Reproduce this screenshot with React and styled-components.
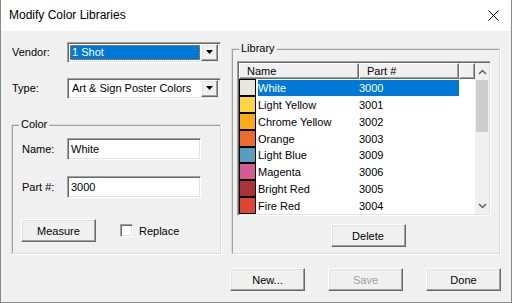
import React from 'react';
import styled, { createGlobalStyle, css } from 'styled-components';

const Global = createGlobalStyle`
  html, body { margin: 0; padding: 0; background: #ffffff; }
  * { box-sizing: border-box; }
`;

const raised = css`
  border: 1px solid;
  border-color: #ffffff #696969 #696969 #ffffff;
  box-shadow: inset -1px -1px 0 #a0a0a0, inset 1px 1px 0 #e3e3e3;
`;

const sunken = css`
  border: 1px solid;
  border-color: #a0a0a0 #ffffff #ffffff #a0a0a0;
  box-shadow: inset 1px 1px 0 #696969, inset -1px -1px 0 #e3e3e3;
`;

const Window = styled.div`
  width: 512px;
  height: 303px;
  border: 1px solid #8a8a8a;
  border-top: none;
  background: #f0f0f0;
  font-family: "Liberation Sans", Arial, sans-serif;
  font-size: 11px;
  color: #000;
  display: flex;
  flex-direction: column;
`;

const TitleBar = styled.div`
  height: 31px;
  background: #ffffff;
  display: flex;
  align-items: center;
  justify-content: space-between;
  padding: 0 12px 1px 8px;
  font-size: 12px;
  flex-shrink: 0;
`;

const Body = styled.div`
  display: grid;
  grid-template-columns: 210px 269px;
  column-gap: 10px;
  padding: 11px 0 0 10px;
`;

const Left = styled.div`
  display: flex;
  flex-direction: column;
`;

const Row = styled.div`
  display: flex;
  align-items: center;
  height: 20px;
  margin-top: ${p => p.$top || 0}px;
`;

const Label = styled.span`
  width: ${p => p.$w || 56}px;
  padding-left: ${p => p.$pad || 1}px;
`;

const Combo = styled.div`
  ${sunken};
  width: 154px;
  height: 21px;
  background: #fff;
  display: flex;
  align-items: center;
  padding: 2px;
`;

const ComboText = styled.div`
  flex: 1;
  height: 100%;
  display: flex;
  align-items: center;
  padding-left: 2px;
  ${p => p.$selected && css`
    background: #0078d7;
    color: #fff;
    outline: 1px dotted #e08020;
    outline-offset: -1px;
  `}
`;

const ComboButton = styled.div`
  ${raised};
  width: 17px;
  height: 17px;
  background: #f0f0f0;
  display: flex;
  align-items: center;
  justify-content: center;
  margin-left: 1px;
`;

const Group = styled.div`
  position: relative;
  border: 1px solid #dcdcdc;
  box-shadow: inset 1px 1px 0 #a0a0a0, 1px 1px 0 #ffffff;
  margin-top: ${p => p.$top || 0}px;
  width: ${p => p.$w}px;
  height: ${p => p.$h}px;
  padding: ${p => p.$pad};
`;

const Legend = styled.span`
  position: absolute;
  top: -7px;
  left: 7px;
  padding: 0 2px;
  background: #f0f0f0;
  line-height: 13px;
`;

const TextBox = styled.div`
  ${sunken};
  width: 134px;
  height: 22px;
  background: #fff;
  padding: 3px 3px;
  line-height: 14px;
`;

const Button = styled.div`
  ${raised};
  width: ${p => p.$w || 75}px;
  height: 23px;
  background: #f0f0f0;
  display: flex;
  align-items: center;
  justify-content: center;
  color: ${p => (p.$disabled ? '#a0a0a0' : '#000')};
`;

const CheckRow = styled.div`
  display: flex;
  align-items: center;
  margin-left: 24px;
  gap: 6px;
`;

const CheckBox = styled.div`
  ${sunken};
  width: 13px;
  height: 13px;
  background: #fff;
`;

const ListBox = styled.div`
  ${sunken};
  width: 254px;
  height: 155px;
  background: #fff;
  padding: 1px;
  display: flex;
`;

const ListMain = styled.div`
  flex: 1;
  display: flex;
  flex-direction: column;
`;

const Header = styled.div`
  display: grid;
  grid-template-columns: 120px 100px 16px;
  height: 16px;
`;

const HeaderCell = styled.div`
  ${raised};
  box-shadow: inset -1px -1px 0 #a0a0a0;
  border-color: #ffffff #696969 #696969 #ffffff;
  background: #f0f0f0;
  padding-left: 7px;
  line-height: 14px;
`;

const ItemRow = styled.div`
  display: flex;
  height: 17px;
  align-items: stretch;
`;

const Swatch = styled.div`
  width: 17px;
  border: 1px solid #000;
  background: ${p => p.$c};
  margin-right: 2px;
`;

const ItemText = styled.div`
  display: grid;
  grid-template-columns: 101px 100px;
  align-items: center;
  width: 201px;
  margin-top: 1px;
  background: ${p => (p.$sel ? '#0078d7' : 'transparent')};
  color: ${p => (p.$sel ? '#fff' : '#000')};
`;

const ScrollBar = styled.div`
  width: 17px;
  background: #f0f0f0;
  display: flex;
  flex-direction: column;
`;

const ScrollArrow = styled.div`
  height: 17px;
  display: flex;
  align-items: center;
  justify-content: center;
`;

const Thumb = styled.div`
  height: 52px;
  background: #cdcdcd;
  margin: 0 1px;
`;

const Track = styled.div`
  flex: 1;
`;

const Center = styled.div`
  display: flex;
  justify-content: center;
  margin-top: 8px;
`;

const Footer = styled.div`
  display: flex;
  justify-content: flex-end;
  gap: 23px;
  padding: 14px 10px 0 0;
`;

const items = [
  ['White', '3000', '#e8e4de'],
  ['Light Yellow', '3001', '#fcd444'],
  ['Chrome Yellow', '3002', '#fbab18'],
  ['Orange', '3003', '#ec6a2c'],
  ['Light Blue', '3009', '#579dbd'],
  ['Magenta', '3006', '#d45c90'],
  ['Bright Red', '3005', '#ad3237'],
  ['Fire Red', '3004', '#de4633'],
];

const Arrow = ({ up }) => (
  <svg width="9" height="6" viewBox="0 0 9 6">
    <path d={up ? 'M1 5 L4.5 1.5 L8 5' : 'M1 1 L4.5 4.5 L8 1'} fill="none" stroke="#606060" strokeWidth="1.5" />
  </svg>
);

const DropArrow = () => (
  <svg width="7" height="4" viewBox="0 0 7 4">
    <path d="M0 0 H7 L3.5 4 Z" fill="#000" />
  </svg>
);

function App() {
  return (
    <>
      <Global />
      <Window>
        <TitleBar>
          <span>Modify Color Libraries</span>
          <svg width="11" height="11" viewBox="0 0 11 11">
            <path d="M0.5 0.5 L10.5 10.5 M10.5 0.5 L0.5 10.5" stroke="#000" strokeWidth="1" />
          </svg>
        </TitleBar>
        <Body>
          <Left>
            <Row>
              <Label>Vendor:</Label>
              <Combo>
                <ComboText $selected>1 Shot</ComboText>
                <ComboButton><DropArrow /></ComboButton>
              </Combo>
            </Row>
            <Row $top={16}>
              <Label>Type:</Label>
              <Combo>
                <ComboText>Art &amp; Sign Poster Colors</ComboText>
                <ComboButton><DropArrow /></ComboButton>
              </Combo>
            </Row>
            <Group $top={26} $w={210} $h={130} $pad="13px 0 0 9px">
              <Legend>Color</Legend>
              <Row $top={0} style={{ height: 22 }}>
                <Label $w={46} $pad={1}>Name:</Label>
                <TextBox>White</TextBox>
              </Row>
              <Row $top={16} style={{ height: 22 }}>
                <Label $w={46} $pad={1}>Part #:</Label>
                <TextBox>3000</TextBox>
              </Row>
              <Row $top={21} style={{ height: 23 }}>
                <Button>Measure</Button>
                <CheckRow>
                  <CheckBox />
                  <span>Replace</span>
                </CheckRow>
              </Row>
            </Group>
          </Left>
          <Group $top={6} $w={269} $h={206} $pad="12px 0 0 5px">
            <Legend>Library</Legend>
            <ListBox>
              <ListMain>
                <Header>
                  <HeaderCell>Name</HeaderCell>
                  <HeaderCell>Part #</HeaderCell>
                  <HeaderCell />
                </Header>
                {items.map(([name, part, c], i) => (
                  <ItemRow key={name}>
                    <Swatch $c={c} />
                    <ItemText $sel={i === 0}>
                      <span>{name}</span>
                      <span>{part}</span>
                    </ItemText>
                  </ItemRow>
                ))}
              </ListMain>
              <ScrollBar>
                <ScrollArrow><Arrow up /></ScrollArrow>
                <Thumb />
                <Track />
                <ScrollArrow><Arrow /></ScrollArrow>
              </ScrollBar>
            </ListBox>
            <Center>
              <Button>Delete</Button>
            </Center>
          </Group>
        </Body>
        <Footer>
          <Button>New...</Button>
          <Button $disabled>Save</Button>
          <Button>Done</Button>
        </Footer>
      </Window>
    </>
  );
}

export default App;
